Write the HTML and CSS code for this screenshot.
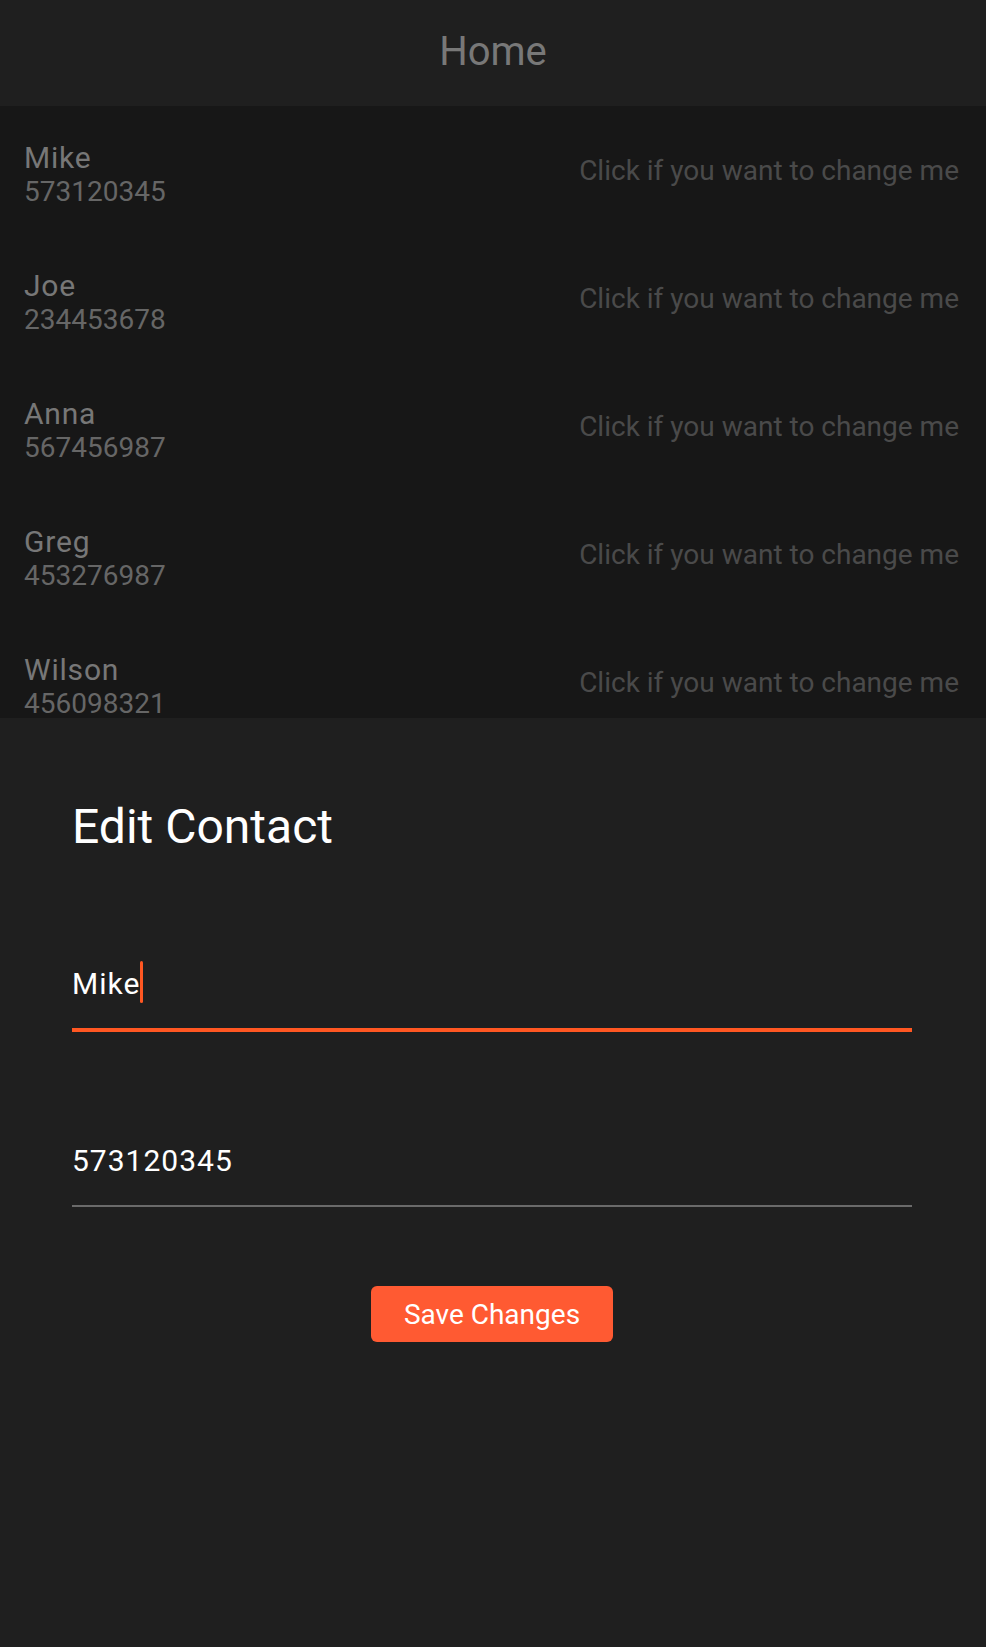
FILE: index.html
```html
<!DOCTYPE html>
<html lang="en">
<head>
<meta charset="utf-8">
<title>Home</title>
<link rel="stylesheet" href="styles.css">
</head>
<body>
<div class="app">
  <header class="appbar"><h1 class="appbar-title">Home</h1></header>
  <ul class="contact-list">
    <li class="contact-row">
      <div class="contact-info"><div class="contact-name">Mike</div><div class="contact-phone">573120345</div></div>
      <div class="contact-hint">Click if you want to change me</div>
    </li>
    <li class="contact-row">
      <div class="contact-info"><div class="contact-name">Joe</div><div class="contact-phone">234453678</div></div>
      <div class="contact-hint">Click if you want to change me</div>
    </li>
    <li class="contact-row">
      <div class="contact-info"><div class="contact-name">Anna</div><div class="contact-phone">567456987</div></div>
      <div class="contact-hint">Click if you want to change me</div>
    </li>
    <li class="contact-row">
      <div class="contact-info"><div class="contact-name">Greg</div><div class="contact-phone">453276987</div></div>
      <div class="contact-hint">Click if you want to change me</div>
    </li>
    <li class="contact-row">
      <div class="contact-info"><div class="contact-name">Wilson</div><div class="contact-phone">456098321</div></div>
      <div class="contact-hint">Click if you want to change me</div>
    </li>
  </ul>
  <section class="sheet">
    <h2 class="sheet-title">Edit Contact</h2>
    <div class="field field-focused"><span class="field-value">Mike</span><span class="caret"></span></div>
    <div class="field field-idle"><span class="field-value">573120345</span></div>
    <div class="actions"><button class="btn-save" type="button">Save Changes</button></div>
  </section>
</div>
</body>
</html>
```
FILE: styles.css
```css
* { box-sizing: border-box; }
html, body { margin: 0; padding: 0; }
body {
  background: #1f1f1f;
  font-family: Roboto, "Liberation Sans", sans-serif;
  width: 986px;
  height: 1647px;
  overflow: hidden;
}
.app { display: flex; flex-direction: column; height: 1647px; }
.appbar {
  height: 106px;
  background: #1f1f1f;
  display: flex;
  align-items: center;
  justify-content: center;
  padding-bottom: 4px;
}
.appbar-title {
  margin: 0;
  font-size: 40px;
  font-weight: 400;
  color: #787878;
}
.contact-list {
  list-style: none;
  margin: 0;
  padding: 0;
  height: 612px;
  overflow: hidden;
  background: #171717;
}
.contact-row {
  height: 128px;
  padding: 35px 27px 0 24px;
  display: flex;
  justify-content: space-between;
  align-items: flex-start;
}
.contact-name { font-size: 30px; letter-spacing: 0.8px; color: #777777; line-height: 33px; }
.contact-phone { font-size: 28px; color: #666666; line-height: 26px; margin-top: 5px; }
.contact-hint { font-size: 28px; color: #4a4a4a; line-height: 33px; margin-top: 13px; }
.sheet {
  flex: 1;
  background: #1f1f1f;
  padding: 81px 74px 0 72px;
}
.sheet-title {
  margin: 0;
  font-size: 48px;
  font-weight: 400;
  color: #ffffff;
  line-height: 56px;
}
.field {
  display: flex;
  align-items: center;
  height: 71px;
  padding-bottom: 25px;
  color: #ffffff;
  font-size: 30px;
  letter-spacing: 1px;
}
.field-value { line-height: 42px; padding-top: 3px; }
.field-focused { margin-top: 106px; border-bottom: 4px solid #ff5722; }
.field-idle { margin-top: 106px; height: 69px; border-bottom: 2px solid #6a6a6a; }
.caret {
  display: inline-block;
  width: 3px;
  height: 42px;
  background: #ff5722;
  border-radius: 2px;
}
.actions { display: flex; justify-content: center; margin-top: 79px; }
.btn-save {
  width: 242px;
  height: 56px;
  border: none;
  border-radius: 6px;
  background: #ff5a32;
  color: #ffffff;
  font-family: Roboto, "Liberation Sans", sans-serif;
  font-size: 28px;
  padding: 0;
}
```
